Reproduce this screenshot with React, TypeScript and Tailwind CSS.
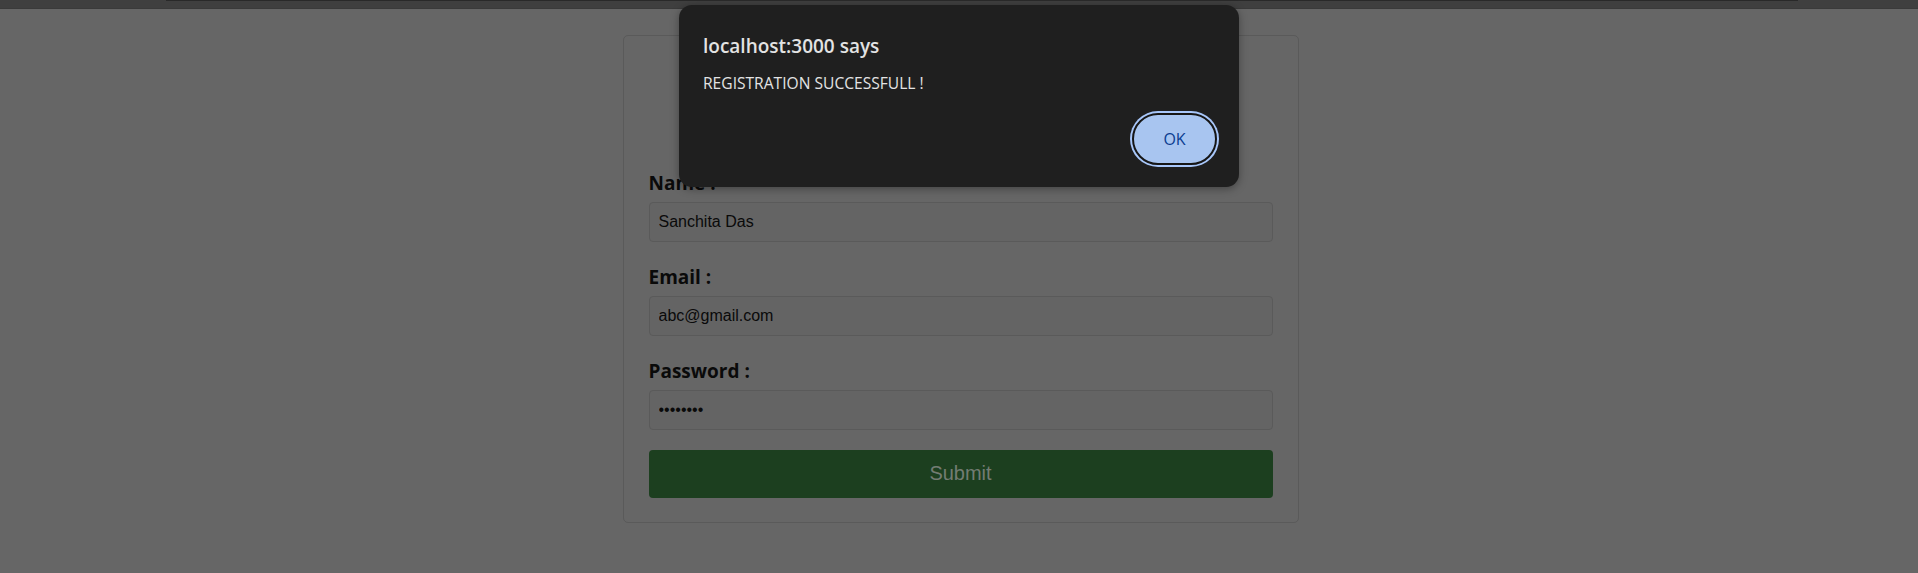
import React from "react";

export default function App() {
  const labelCls =
    "block text-[19px] leading-[24px] font-bold text-[#0a0a0a] mb-[7px] [font-family:'Open_Sans',sans-serif]";
  const inputCls =
    "block w-full h-[40px] rounded-[4px] border border-[#5a5a5a] bg-[#646464] pl-[9px] text-[16px] text-[#0a0a0a] outline-none [font-family:'Liberation_Sans',Arial,sans-serif]";
  return (
    <div className="relative w-full h-[573px] overflow-hidden bg-[#666666]">
      {/* top band */}
      <div className="h-[9px] bg-[#3f3f3f] border-b border-[#3a3a3a] flex">
        <div className="ml-[166px] mr-[120px] flex-1 h-px bg-[#292929]" />
      </div>

      {/* form card */}
      <div className="flex justify-center pt-[26px] pl-[3px]">
        <div className="w-[676px] h-[488px] rounded-[5px] border border-[#5a5a5a] bg-[#666666] px-[25px] pt-[135px] pb-[24px]">
          <form className="flex flex-col" onSubmit={(e) => e.preventDefault()}>
            <div className="mb-[23px]">
              <label className={labelCls}>Name :</label>
              <input className={inputCls} defaultValue="Sanchita Das" />
            </div>
            <div className="mb-[23px]">
              <label className={labelCls}>Email :</label>
              <input className={inputCls} defaultValue="abc@gmail.com" />
            </div>
            <div className="mb-[20px]">
              <label className={labelCls}>Password :</label>
              <input type="password" className={inputCls} defaultValue="12345678" />
            </div>
            <button
              type="submit"
              className="h-[48px] w-full rounded-[4px] bg-[#1c3f1f] text-[20px] leading-[22px] pb-[2px] text-[#737c73] [font-family:'Liberation_Sans',Arial,sans-serif]"
            >
              Submit
            </button>
          </form>
        </div>
      </div>

      {/* alert dialog */}
      <div className="absolute left-1/2 top-[5px] -translate-x-1/2 w-[560px] h-[182px] rounded-[13px] bg-[#1f1f1f] shadow-[0_2px_8px_rgba(0,0,0,0.35)] flex flex-col pl-[24px] pr-[22px] pt-[29px] pb-[22px] [font-family:'Open_Sans',sans-serif]">
        <div className="text-[19px] leading-[24px] font-semibold text-[#e3e3e3]">
          localhost:3000 says
        </div>
        <div className="mt-[15px] text-[15.6px] leading-[20px] text-[#e3e3e3]">
          REGISTRATION SUCCESSFULL !
        </div>
        <div className="mt-auto flex justify-end">
          <button className="w-[85px] h-[52px] rounded-full border-2 border-[#161616] bg-[#a8c5f0] ring-2 ring-[#a8c7fa] text-[16px] font-medium text-[#0b3d91]">
            OK
          </button>
        </div>
      </div>
    </div>
  );
}
